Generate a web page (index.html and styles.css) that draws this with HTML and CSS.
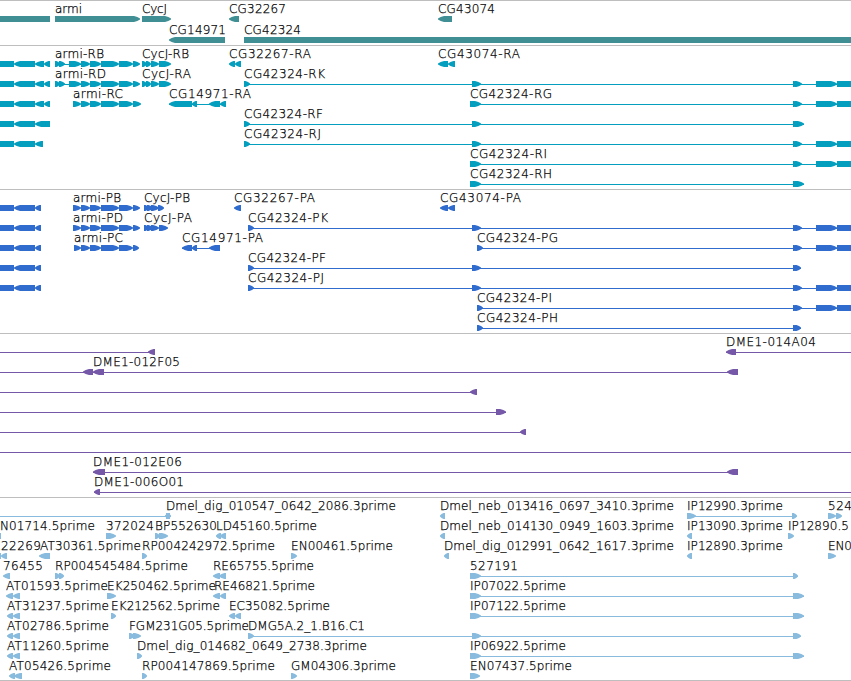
FILE: index.html
```
<!DOCTYPE html>
<html>
  <head>
    <meta charset="UTF-8" />
    <title>Genome Browser</title>
    <link rel="stylesheet" href="styles.css">
  </head>
  <body>
    <div id="tracks">
      <div class="track genes" id="genes"></div>
      <div class="track transcripts" id="transcripts"></div>
      <div class="track proteins" id="proteins"></div>
      <div class="track bacs" id="bacs"></div>
      <div class="track ests" id="ests"></div>
    </div>
    <script src="tracks.js"></script>
  </body>
</html>
```
FILE: styles.css
```
body {
  margin: 0;
  background-color: #fff;
  overflow: hidden;
}
#tracks {
  width: 851px;
  border-bottom: 1px solid #bebebe;
}
.track {
  border-top: 1px solid #bebebe;
  padding-bottom: 3px;
}
.track svg {
  display: block;
  overflow: visible;
}
.genes {
  padding-bottom: 2px;
  fill: #3f8f94;
}
.transcripts {
  fill: #049fbf;
}
.proteins {
  fill: #2f6ccd;
}
.bacs {
  fill: #7558a8;
}
.ests {
  padding-bottom: 2px;
  fill: #88bbdd;
}
.bar {
  shape-rendering: crispEdges;
}
.label {
  fill: #000;
  font-family: "DejaVu Sans", sans-serif;
  font-size: 12px;
  font-weight: 200;
  stroke: #000;
  stroke-width: 0.25px;
}
```
FILE: tracks.js
```
const WIDTH = 851;
const NS = 'http://www.w3.org/2000/svg';

// glyphs: "_" line, "=" plain box, ">" / "<" box with an arrow head
// labels: [text, start, end]
const leftCluster = '=0-14 <14-35 <35-44 <44-50';
const leftCds = '=0-14 <14-35 <35-41';
const armi = '>81-90 >90-101 >101-119 >119-133';
const tail = '>793-798 >795-802 >816-837 =837-851';

const tracks = {
  genes: { pitch: 21, rows: [
    { glyphs: '=0-50 >55-140 >142-171 <229-239 <438-452',
      labels: [['armi', 55, 82], ['CycJ', 142, 167], ['CG32267', 229, 286], ['CG43074', 438, 495]] },
    { glyphs: '<169-225 =244-851',
      labels: [['CG14971', 169, 226], ['CG42324', 244, 301]] }
  ] },
  transcripts: { pitch: 20, rows: [
    { glyphs: `${leftCluster} _55-81 >55-60 >59-65 >69-81 ${armi} >133-140 >142-147 >146-151 >151-159 >159-171 <229-235 <235-241 <438-448 <448-455`,
      labels: [['armi-RB', 55, 104], ['CycJ-RB', 142, 189], ['CG32267-RA', 229, 311], ['CG43074-RA', 438, 520]] },
    { glyphs: `${leftCluster} _55-81 >55-60 >59-65 >69-81 ${armi} >133-140 >142-147 >146-151 >151-159 >159-171 _244-851 >244-250 >472-481 ${tail}`,
      labels: [['armi-RD', 55, 106], ['CycJ-RA', 142, 191], ['CG42324-RK', 244, 325]] },
    { glyphs: `${leftCluster} >73-81 ${armi} >133-141 _169-226 <169-192 <192-197 <209-220 <220-226 _470-851 >470-477 >472-481 ${tail}`,
      labels: [['armi-RC', 73, 123], ['CG14971-RA', 169, 251], ['CG42324-RG', 470, 552]] },
    { glyphs: '=0-14 <14-35 <35-50 _244-804 >244-250 >472-481 >793-799 >795-804',
      labels: [['CG42324-RF', 244, 323]] },
    { glyphs: `=0-14 <14-35 <35-43 _244-851 >244-250 >472-481 ${tail}`,
      labels: [['CG42324-RJ', 244, 321]] },
    { glyphs: `_470-851 >470-477 >472-481 ${tail}`,
      labels: [['CG42324-RI', 470, 547]] },
    { glyphs: '_470-804 >470-477 >472-481 >793-799 >795-804',
      labels: [['CG42324-RH', 470, 552]] }
  ] },
  proteins: { pitch: 20, rows: [
    { glyphs: `${leftCds} >73-81 ${armi} >133-140 >144-149 >147-153 >151-159 >158-164 <234-241 <440-448 <448-455`,
      labels: [['armi-PB', 73, 121], ['CycJ-PB', 144, 190], ['CG32267-PA', 234, 315], ['CG43074-PA', 440, 521]] },
    { glyphs: `${leftCds} >73-81 ${armi} >133-140 >144-149 >147-153 >151-159 >159-168 _248-851 >248-254 >472-481 ${tail}`,
      labels: [['armi-PD', 73, 123], ['CycJ-PA', 144, 192], ['CG42324-PK', 248, 328]] },
    { glyphs: `${leftCds} >74-81 ${armi} >133-139 _182-220 <182-192 <192-197 <209-220 _477-851 >477-483 ${tail}`,
      labels: [['armi-PC', 74, 123], ['CG14971-PA', 182, 263], ['CG42324-PG', 477, 558]] },
    { glyphs: `${leftCds} _248-801 >248-254 >472-481 >793-798 >795-801`,
      labels: [['CG42324-PF', 248, 326]] },
    { glyphs: `${leftCds} _248-851 >248-254 >472-481 ${tail}`,
      labels: [['CG42324-PJ', 248, 324]] },
    { glyphs: `_477-851 >477-483 ${tail}`,
      labels: [['CG42324-PI', 477, 552]] },
    { glyphs: '_477-801 >477-483 >793-798 >795-801',
      labels: [['CG42324-PH', 477, 558]] }
  ] },
  bacs: { pitch: 20, rows: [
    { glyphs: '_0-155 <148-155 _726-851 <726-736', labels: [['DME1-014A04', 726, 816]] },
    { glyphs: '_0-738 <83-93 <93-104 <727-738', labels: [['DME1-012F05', 93, 180]] },
    { glyphs: '_0-477 <470-477', labels: [] },
    { glyphs: '_0-506 >496-506', labels: [] },
    { glyphs: '_0-526 <520-526', labels: [] },
    { glyphs: '_0-851', labels: [] },
    { glyphs: '_93-738 <93-105 <727-738', labels: [['DME1-012E06', 93, 182]] },
    { glyphs: '_94-851 <94-100', labels: [['DME1-006O01', 94, 184]] }
  ] },
  ests: { pitch: 20, rows: [
    { glyphs: '_0-171 <165-170 >166-171 <440-445 _687-797 >687-696 >792-797 >828-836 >836-842',
      labels: [['Dmel_dig_010547_0642_2086.3prime', 166, 396], ['Dmel_neb_013416_0697_3410.3prime', 440, 674], ['IP12990.3prime', 687, 783], ['524', 828, 852]] },
    { glyphs: '=0-1 >106-116 >155-160 >159-168 <216-221 <220-226 <440-445 <687-692 >788-794',
      labels: [['N01714.5prime', 0, 95], ['372024', 106, 154], ['BP552630', 155, 217], ['LD45160.5prime', 216, 317], ['Dmel_neb_014130_0949_1603.3prime', 440, 674], ['IP13090.3prime', 687, 783], ['IP12890.5', 788, 849]] },
    { glyphs: '=0-1 <1-7 <39-50 >142-147 >291-297 <444-449 <687-692 >828-836',
      labels: [['22269', 1, 41], ['AT30361.5prime', 40, 141], ['RP004242972.5prime', 142, 275], ['EN00461.5prime', 291, 393], ['Dmel_dig_012991_0642_1617.3prime', 444, 674], ['IP12890.3prime', 687, 783], ['EN0', 828, 852]] },
    { glyphs: '<3-10 >55-60 >59-64 <213-220 <219-226 _470-798 >470-477 >472-481 >793-798',
      labels: [['76455', 3, 43], ['RP004545484.5prime', 55, 188], ['RE65755.5prime', 213, 314], ['527191', 470, 518]] },
    { glyphs: '<6-13 <13-20 >107-116 <213-220 <220-226 _470-804 >470-477 >472-481 >793-799 >795-804',
      labels: [['AT01593.5prime', 6, 108], ['EK250462.5prime', 107, 216], ['RE46821.5prime', 214, 315], ['IP07022.5prime', 470, 566]] },
    { glyphs: '<7-13 <13-20 >111-116 <229-235 <235-241 _470-804 >470-477 >472-481 >793-799 >795-804',
      labels: [['AT31237.5prime', 7, 109], ['EK212562.5prime', 111, 220], ['EC35082.5prime', 229, 330], ['IP07122.5prime', 470, 566]] },
    { glyphs: '<7-13 <13-20 >129-135 >133-141 _248-801 >248-254 >472-481 >793-798 >795-801',
      labels: [['AT02786.5prime', 7, 109], ['FGM231G05.5prime', 129, 249], ['DMG5A.2_1.B16.C1', 248, 365]] },
    { glyphs: '<7-13 <13-20 >137-142 _470-804 >470-477 >472-481 >793-799 >795-804',
      labels: [['AT11260.5prime', 7, 109], ['Dmel_dig_014682_0649_2738.3prime', 137, 367], ['IP06922.5prime', 470, 566]] },
    { glyphs: '<9-15 <14-22 >142-147 >291-297 >470-480',
      labels: [['AT05426.5prime', 9, 111], ['RP004147869.5prime', 142, 275], ['GM04306.3prime', 291, 396], ['EN07437.5prime', 470, 572]] }
  ] }
};

function add(parent, name, attrs) {
  const el = document.createElementNS(NS, name);
  for (const key in attrs) el.setAttribute(key, attrs[key]);
  parent.appendChild(el);
  return el;
}

function drawGlyph(svg, spec, y) {
  const kind = spec[0];
  const [a, b] = spec.slice(1).split('-').map(Number);
  if (kind === '_') {
    add(svg, 'rect', { class: 'bar', x: a, y: y + 3, width: b - a, height: 1 });
    return;
  }
  if (kind === '=') {
    add(svg, 'rect', { class: 'bar', x: a, y: y, width: b - a, height: 6 });
    return;
  }
  const head = Math.min(b - a - 1.5, 6);
  const dir = kind === '>' ? 1 : -1;
  const tip = kind === '>' ? b : a;
  const back = kind === '>' ? a : b;
  const neck = tip - dir * head;
  const mid = tip - dir * head * 0.45;
  add(svg, 'polygon', {
    points: `${back},${y} ${neck},${y} ${mid},${y + 1} ${tip},${y + 2.4} ${tip},${y + 3.6} ${mid},${y + 5} ${neck},${y + 6} ${back},${y + 6}`
  });
}

for (const id in tracks) {
  const { pitch, rows } = tracks[id];
  const svg = add(document.getElementById(id), 'svg', { width: WIDTH, height: rows.length * pitch });
  rows.forEach((row, i) => {
    const top = i * pitch;
    row.glyphs.split(' ').forEach(spec => drawGlyph(svg, spec, top + 15));
    row.labels.forEach(([text, start, end]) => {
      const label = add(svg, 'text', { class: 'label', x: start, y: top + 12, textLength: end - start });
      label.textContent = text;
    });
  });
}
```
